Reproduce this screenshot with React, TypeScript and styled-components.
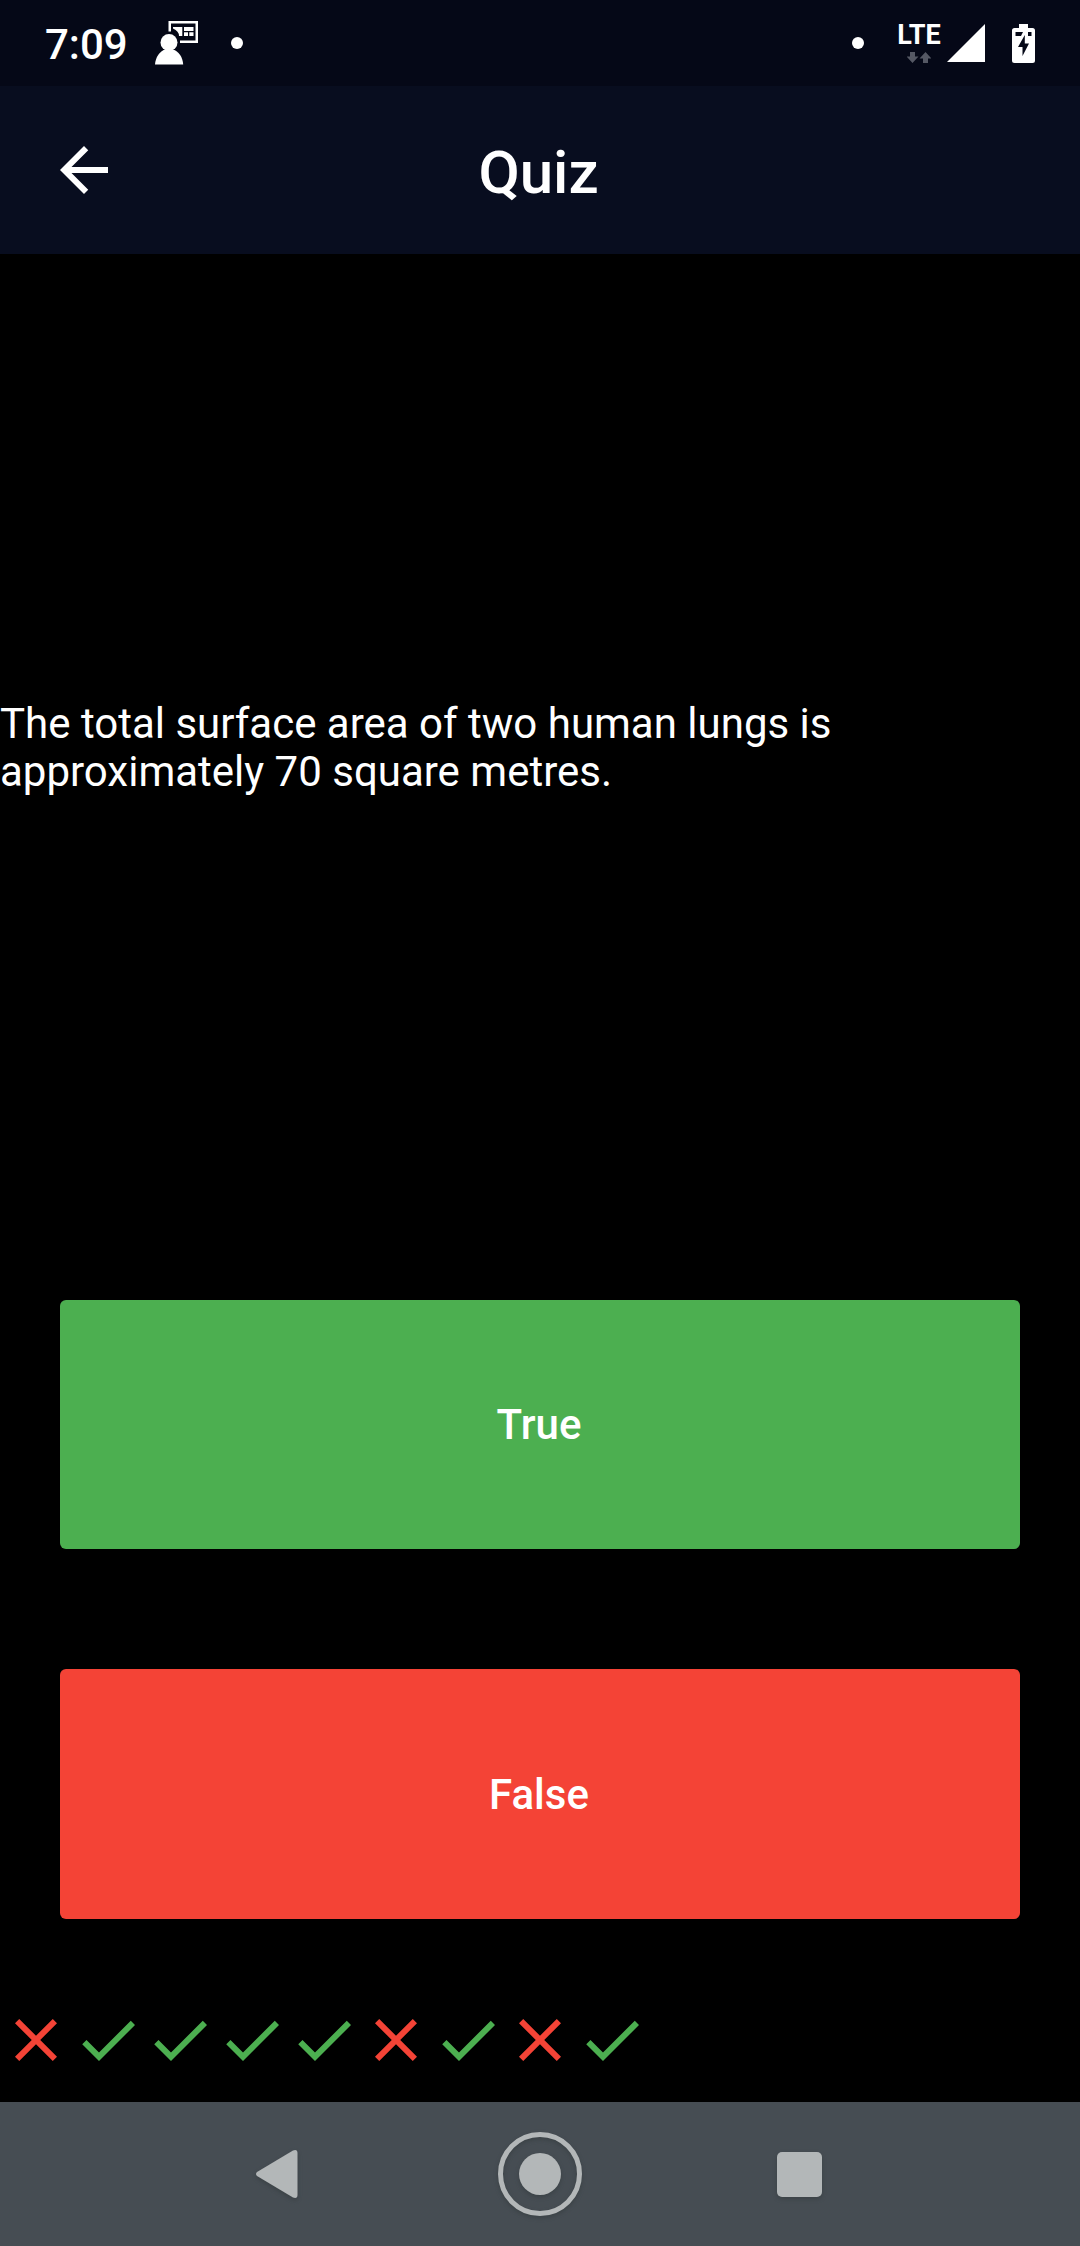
import React from "react";
import styled, { createGlobalStyle } from "styled-components";

const GlobalStyle = createGlobalStyle`
  html, body { margin: 0; padding: 0; background: #000; }
  *, *::before, *::after { box-sizing: border-box; }
`;

const Screen = styled.div`
  width: 1080px;
  height: 2246px;
  display: flex;
  flex-direction: column;
  background: #000;
  color: #fff;
  font-family: Roboto, "Noto Sans", sans-serif;
  overflow: hidden;
`;

const StatusBar = styled.header`
  flex: none;
  height: 86px;
  padding: 0 45px;
  display: flex;
  align-items: center;
  justify-content: space-between;
  background: #050817;
`;

const StatusGroup = styled.div`
  display: flex;
  align-items: center;
  height: 100%;
`;

const Clock = styled.span`
  width: 110px;
  padding-top: 3px;
  font-size: 42px;
  line-height: 50px;
  font-weight: 500;
`;

const StatusDot = styled.i<{ $before?: number }>`
  width: 12px;
  height: 12px;
  border-radius: 50%;
  background: #fff;
  margin-left: ${(p) => p.$before ?? 0}px;
`;

const Network = styled.div`
  width: 48px;
  margin-left: 31px;
  height: 42px;
  padding-top: 3px;
  display: flex;
  flex-direction: column;
  align-items: center;
  justify-content: space-between;
`;

const NetworkLabel = styled.span`
  font-size: 27px;
  line-height: 20px;
  font-weight: 700;
  white-space: nowrap;
`;

const Glyph = styled.svg<{ $before?: number }>`
  display: block;
  flex: none;
  margin-left: ${(p) => p.$before ?? 0}px;
`;

const AppBar = styled.div`
  flex: none;
  height: 168px;
  padding: 0 48px;
  display: grid;
  grid-template-columns: 72px 1fr 72px;
  align-items: center;
  background: #080d1f;
`;

const BackButton = styled.button`
  width: 72px;
  height: 72px;
  padding: 0;
  border: 0;
  background: none;
  color: inherit;
`;

const Title = styled.h1`
  margin: 0;
  padding: 5px 3px 0 0;
  text-align: center;
  font-size: 60px;
  line-height: 70px;
  font-weight: 500;
`;

const Body = styled.main`
  flex: 1;
  min-height: 0;
  display: grid;
  grid-template-rows: 8fr 3fr 3fr 1fr;
`;

const QuestionArea = styled.section`
  display: flex;
  align-items: center;
`;

const Question = styled.p`
  margin: 0;
  padding-top: 2px;
  width: 900px;
  font-size: 42px;
  line-height: 48px;
`;

const AnswerCell = styled.div`
  padding: 60px;
  display: flex;
`;

const AnswerButton = styled.button<{ $color: string }>`
  flex: 1;
  border: 0;
  padding: 1px 2px 0 0;
  border-radius: 6px;
  background: ${(p) => p.$color};
  color: #fff;
  font: 500 42px/49px Roboto, "Noto Sans", sans-serif;
`;

const ScoreRow = styled.div`
  display: flex;
  align-items: center;
`;

const NavBar = styled.nav`
  flex: none;
  height: 144px;
  display: grid;
  grid-template-columns: repeat(3, 259px);
  justify-content: center;
  align-items: center;
  justify-items: center;
  background: #464d53;
`;

const NavIcon = styled.svg`
  display: block;
  fill: #b3b7b8;
  filter: drop-shadow(0 2px 2px rgba(40, 48, 48, 0.4));
`;

const Mark = ({ ok }: { ok: boolean }) => (
  <Glyph width="72" height="72" viewBox="0 0 24 24" fill={ok ? "#4caf50" : "#f44336"}>
    {ok ? (
      <path d="M9 16.17 4.83 12l-1.42 1.41L9 19 21 7l-1.41-1.41z" />
    ) : (
      <path d="M19 6.41 17.59 5 12 10.59 6.41 5 5 6.41 10.59 12 5 17.59 6.41 19 12 13.41 17.59 19 19 17.59 13.41 12z" />
    )}
  </Glyph>
);

const results = [false, true, true, true, true, false, true, false, true];

export default function App() {
  return (
    <Screen>
      <GlobalStyle />
      <StatusBar>
        <StatusGroup>
          <Clock>7:09</Clock>
          <Glyph width="44" height="44" viewBox="0 0 44 44" fill="#fff">
            <path fillRule="evenodd" d="M13.500 0H43V22H25V19.500H40.500V2.500H16V10.500H13.500Z" />
            <path d="M18 6h9.300v9H24q0-5-6-7.500ZM29 6h9.500v4H29ZM29 11.300h4V15h-4ZM34.300 11.300h4.200V15h-4.200Z" />
            <circle cx="14" cy="21.500" r="8.500" />
            <path d="M0 43.500C.5 36 5 30 10 28.500h8c5.500 1.500 9.700 7.500 10.200 15Z" />
          </Glyph>
          <StatusDot $before={32} />
        </StatusGroup>
        <StatusGroup>
          <StatusDot />
          <Network>
            <NetworkLabel>LTE</NetworkLabel>
            <Glyph width="24" height="12" viewBox="0 0 24 12" fill="#555864">
              <path d="M3 0h5v4.500h3.500L5.500 11 -.5 4.500H3ZM16 11h5V6.500h3.500L18.500 0 12.500 6.500H16Z" />
            </Glyph>
          </Network>
          <Glyph $before={4} width="38" height="38" viewBox="0 0 38 38" fill="#fff">
            <path d="M38 0V38H0Z" />
          </Glyph>
          <Glyph $before={27} width="23" height="39" viewBox="0 0 23 39" fill="#fff">
            <path
              fillRule="evenodd"
              d="M7 0h9v4h4.500Q23 4 23 6.500v30Q23 39 20.500 39h-18Q0 39 0 36.500v-30Q0 4 2.500 4H7ZM3.500 8v4H9l2-4ZM16 8v4h3.500V8ZM12.800 11v8.500H17L10.500 32v-9H6Z"
            />
          </Glyph>
        </StatusGroup>
      </StatusBar>
      <AppBar>
        <BackButton aria-label="Back">
          <Glyph width="72" height="72" viewBox="0 0 24 24" fill="#fff">
            <path d="M20 11H7.830l5.590-5.590L12 4l-8 8 8 8 1.410-1.410L7.830 13H20z" />
          </Glyph>
        </BackButton>
        <Title>Quiz</Title>
      </AppBar>
      <Body>
        <QuestionArea>
          <Question>The total surface area of two human lungs is approximately 70 square metres.</Question>
        </QuestionArea>
        <AnswerCell>
          <AnswerButton $color="#4caf50">True</AnswerButton>
        </AnswerCell>
        <AnswerCell>
          <AnswerButton $color="#f44336">False</AnswerButton>
        </AnswerCell>
        <ScoreRow>
          {results.map((ok, i) => (
            <Mark key={i} ok={ok} />
          ))}
        </ScoreRow>
      </Body>
      <NavBar>
        <NavIcon width="52" height="50" viewBox="0 0 52 50">
          <path d="M2 23 38 1.500Q42.500 0 42.500 4V46Q42.500 50 38 48.500L2 27Q0 25 2 23Z" />
        </NavIcon>
        <NavIcon width="84" height="84" viewBox="0 0 84 84">
          <circle cx="42" cy="42" r="39.500" fill="none" stroke="#b3b7b8" strokeWidth="5" />
          <circle cx="42" cy="42" r="21" />
        </NavIcon>
        <NavIcon width="45" height="45" viewBox="0 0 45 45">
          <rect width="45" height="45" rx="5" />
        </NavIcon>
      </NavBar>
    </Screen>
  );
}
